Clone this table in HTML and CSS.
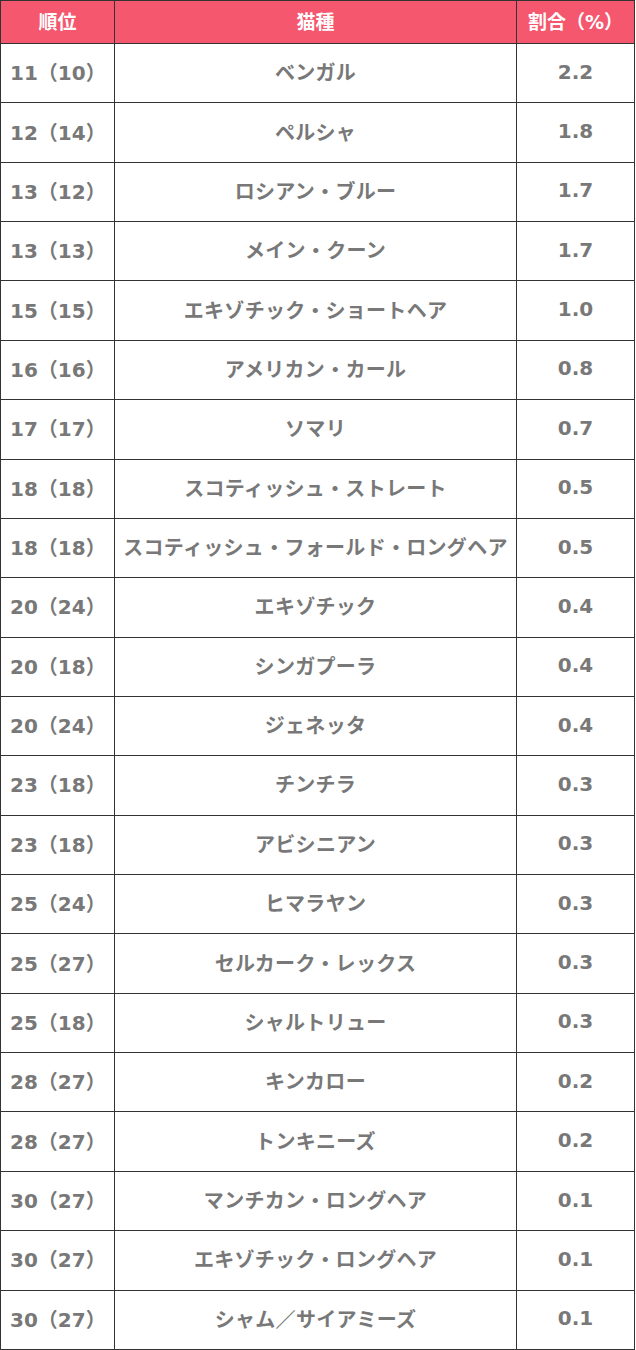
FILE: index.html
```html
<!DOCTYPE html>
<html lang="ja">
<head>
<meta charset="utf-8">
<title>猫種ランキング</title>
<link rel="stylesheet" href="styles.css">
</head>
<body>
<table class="rank">
  <thead>
    <tr class="head"><th class="c-rank">順位</th><th class="c-name">猫種</th><th class="c-pct">割合（%）</th></tr>
  </thead>
  <tbody>
    <tr><td class="c-rank">11（10）</td><td class="c-name">ベンガル</td><td class="c-pct">2.2</td></tr>
    <tr><td class="c-rank">12（14）</td><td class="c-name">ペルシャ</td><td class="c-pct">1.8</td></tr>
    <tr><td class="c-rank">13（12）</td><td class="c-name">ロシアン・ブルー</td><td class="c-pct">1.7</td></tr>
    <tr><td class="c-rank">13（13）</td><td class="c-name">メイン・クーン</td><td class="c-pct">1.7</td></tr>
    <tr><td class="c-rank">15（15）</td><td class="c-name">エキゾチック・ショートヘア</td><td class="c-pct">1.0</td></tr>
    <tr><td class="c-rank">16（16）</td><td class="c-name">アメリカン・カール</td><td class="c-pct">0.8</td></tr>
    <tr><td class="c-rank">17（17）</td><td class="c-name">ソマリ</td><td class="c-pct">0.7</td></tr>
    <tr><td class="c-rank">18（18）</td><td class="c-name">スコティッシュ・ストレート</td><td class="c-pct">0.5</td></tr>
    <tr><td class="c-rank">18（18）</td><td class="c-name">スコティッシュ・フォールド・ロングヘア</td><td class="c-pct">0.5</td></tr>
    <tr><td class="c-rank">20（24）</td><td class="c-name">エキゾチック</td><td class="c-pct">0.4</td></tr>
    <tr><td class="c-rank">20（18）</td><td class="c-name">シンガプーラ</td><td class="c-pct">0.4</td></tr>
    <tr><td class="c-rank">20（24）</td><td class="c-name">ジェネッタ</td><td class="c-pct">0.4</td></tr>
    <tr><td class="c-rank">23（18）</td><td class="c-name">チンチラ</td><td class="c-pct">0.3</td></tr>
    <tr><td class="c-rank">23（18）</td><td class="c-name">アビシニアン</td><td class="c-pct">0.3</td></tr>
    <tr><td class="c-rank">25（24）</td><td class="c-name">ヒマラヤン</td><td class="c-pct">0.3</td></tr>
    <tr><td class="c-rank">25（27）</td><td class="c-name">セルカーク・レックス</td><td class="c-pct">0.3</td></tr>
    <tr><td class="c-rank">25（18）</td><td class="c-name">シャルトリュー</td><td class="c-pct">0.3</td></tr>
    <tr><td class="c-rank">28（27）</td><td class="c-name">キンカロー</td><td class="c-pct">0.2</td></tr>
    <tr><td class="c-rank">28（27）</td><td class="c-name">トンキニーズ</td><td class="c-pct">0.2</td></tr>
    <tr><td class="c-rank">30（27）</td><td class="c-name">マンチカン・ロングヘア</td><td class="c-pct">0.1</td></tr>
    <tr><td class="c-rank">30（27）</td><td class="c-name">エキゾチック・ロングヘア</td><td class="c-pct">0.1</td></tr>
    <tr><td class="c-rank">30（27）</td><td class="c-name">シャム／サイアミーズ</td><td class="c-pct">0.1</td></tr>
  </tbody>
</table>
</body>
</html>
```
FILE: styles.css
```css
html, body {
  margin: 0;
  padding: 0;
  background: #ffffff;
}

.rank {
  width: 635px;
  border-collapse: collapse;
  table-layout: fixed;
  font-family: "DejaVu Sans", "Noto Sans CJK JP", sans-serif;
  font-weight: bold;
  font-size: 20px;
  color: #787878;
}

.rank th,
.rank td {
  border: 1px solid #333333;
  padding: 0 0 3px 0;
  vertical-align: middle;
  white-space: nowrap;
}

.head {
  height: 43px;
}

.head th {
  background: #f5576f;
  color: #ffffff;
  font-weight: bold;
  text-align: center;
  font-size: 19px;
}

.rank tbody tr {
  height: 59.36px;
}

.c-rank {
  width: 113px;
}

.c-name {
  width: 401px;
  text-align: center;
}

.rank td.c-name {
  letter-spacing: 0.3px;
}

.c-pct {
  text-align: center;
}

.rank td.c-rank {
  text-align: left;
  padding-left: 9px;
}
```
